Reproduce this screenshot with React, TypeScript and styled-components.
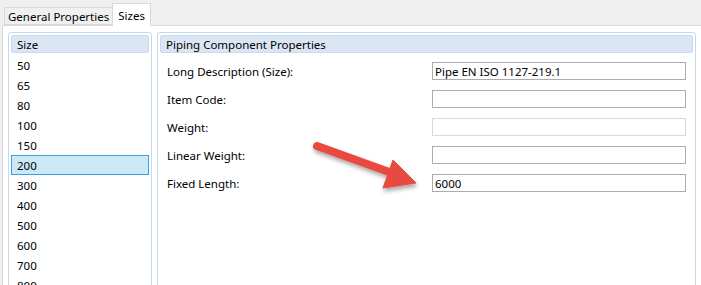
import React from "react";
import styled, { createGlobalStyle } from "styled-components";

const Global = createGlobalStyle`
  html, body { margin: 0; padding: 0; background: #f0f0f0; }
  body { font-family: "Segoe UI", "Noto Sans", "Open Sans", sans-serif; font-size: 11.5px; color: #000; }
`;

const Window = styled.div`
  position: relative;
  width: 701px;
  height: 285px;
  overflow: hidden;
  display: flex;
  flex-direction: column;
  background: #f0f0f0;
`;

const TabStrip = styled.div`
  height: 25px;
  display: flex;
  align-items: flex-end;
  padding-left: 4px;
  box-sizing: border-box;
`;

const Tab = styled.div<{ $active?: boolean }>`
  box-sizing: border-box;
  height: ${(p) => (p.$active ? "23px" : "18px")};
  padding: 0 ${(p) => (p.$active ? "5px" : "3px")};
  margin-bottom: ${(p) => (p.$active ? "-1px" : "0")};
  display: flex;
  align-items: center;
  border: 1px solid #d9d9d9;
  border-bottom: ${(p) => (p.$active ? "none" : "1px solid #d9d9d9")};
  margin-left: ${(p) => (p.$active ? "-1px" : "0")};
  background: ${(p) => (p.$active ? "#ffffff" : "#f0f0f0")};
  position: relative;
  z-index: ${(p) => (p.$active ? 1 : 0)};
  white-space: nowrap;
`;

const Content = styled.div`
  flex: 1;
  margin-left: 2px;
  border-top: 1px solid #d9d9d9;
  border-left: 1px solid #d9d9d9;
  background: #ffffff;
  display: flex;
  gap: 5px;
  padding: 6px 5px 0 5px;
  min-height: 0;
`;

const Panel = styled.div<{ $width: number }>`
  box-sizing: border-box;
  width: ${(p) => p.$width}px;
  height: 280px;
  border: 1px solid #c5d9ee;
  border-radius: 3px;
  padding: 2px;
  display: flex;
  flex-direction: column;
`;

const Header = styled.div`
  height: 18px;
  box-sizing: border-box;
  background: #dae6f3;
  border: 1px solid #c9dbee;
  border-radius: 2px;
  display: flex;
  align-items: center;
  padding-left: 5px;
`;

const List = styled.div`
  display: flex;
  flex-direction: column;
  padding-top: 2px;
`;

const Item = styled.div<{ $selected?: boolean }>`
  box-sizing: border-box;
  height: 20px;
  display: flex;
  align-items: center;
  padding-left: 5px;
  border: 1px solid ${(p) => (p.$selected ? "#3aa0dc" : "transparent")};
  background: ${(p) => (p.$selected ? "#cbe8f6" : "transparent")};
`;

const Form = styled.div`
  display: flex;
  flex-direction: column;
  gap: 10px;
  padding: 9px 7px 0 7px;
`;

const Row = styled.div`
  display: flex;
  align-items: center;
  justify-content: space-between;
  height: 18px;
`;

const Label = styled.div`
  white-space: nowrap;
`;

const Field = styled.div<{ $disabled?: boolean }>`
  box-sizing: border-box;
  width: 254px;
  height: 18px;
  border: 1px solid ${(p) => (p.$disabled ? "#d9d9d9" : "#acacac")};
  display: flex;
  align-items: center;
  padding-left: 2px;
  white-space: nowrap;
`;

const Arrow = styled.svg`
  position: absolute;
  left: 300px;
  top: 130px;
  pointer-events: none;
`;

const sizes = ["50", "65", "80", "100", "150", "200", "300", "400", "500", "600", "700", "800"];

const fields: { label: string; value?: string; disabled?: boolean }[] = [
  { label: "Long Description (Size):", value: "Pipe EN ISO 1127-219.1" },
  { label: "Item Code:" },
  { label: "Weight:", disabled: true },
  { label: "Linear Weight:" },
  { label: "Fixed Length:", value: "6000" },
];

export default function App() {
  return (
    <>
      <Global />
      <Window>
        <TabStrip>
          <Tab>General Properties</Tab>
          <Tab $active>Sizes</Tab>
        </TabStrip>
        <Content>
          <Panel $width={144}>
            <Header>Size</Header>
            <List>
              {sizes.map((s) => (
                <Item key={s} $selected={s === "200"}>
                  {s}
                </Item>
              ))}
            </List>
          </Panel>
          <Panel $width={539}>
            <Header>Piping Component Properties</Header>
            <Form>
              {fields.map((f) => (
                <Row key={f.label}>
                  <Label>{f.label}</Label>
                  <Field $disabled={f.disabled}>{f.value ?? ""}</Field>
                </Row>
              ))}
            </Form>
          </Panel>
        </Content>
        <Arrow width="130" height="70" viewBox="300 130 130 70">
          <defs>
            <filter id="sh" x="-20%" y="-20%" width="140%" height="160%">
              <feDropShadow dx="1" dy="3" stdDeviation="2" floodColor="#000" floodOpacity="0.35" />
            </filter>
          </defs>
          <g filter="url(#sh)" fill="#e8493f" stroke="#e8493f">
            <line x1="317" y1="146" x2="392" y2="173" strokeWidth="8" strokeLinecap="round" />
            <polygon points="393,160 416,183 383,188" strokeWidth="1" strokeLinejoin="round" />
          </g>
        </Arrow>
      </Window>
    </>
  );
}
